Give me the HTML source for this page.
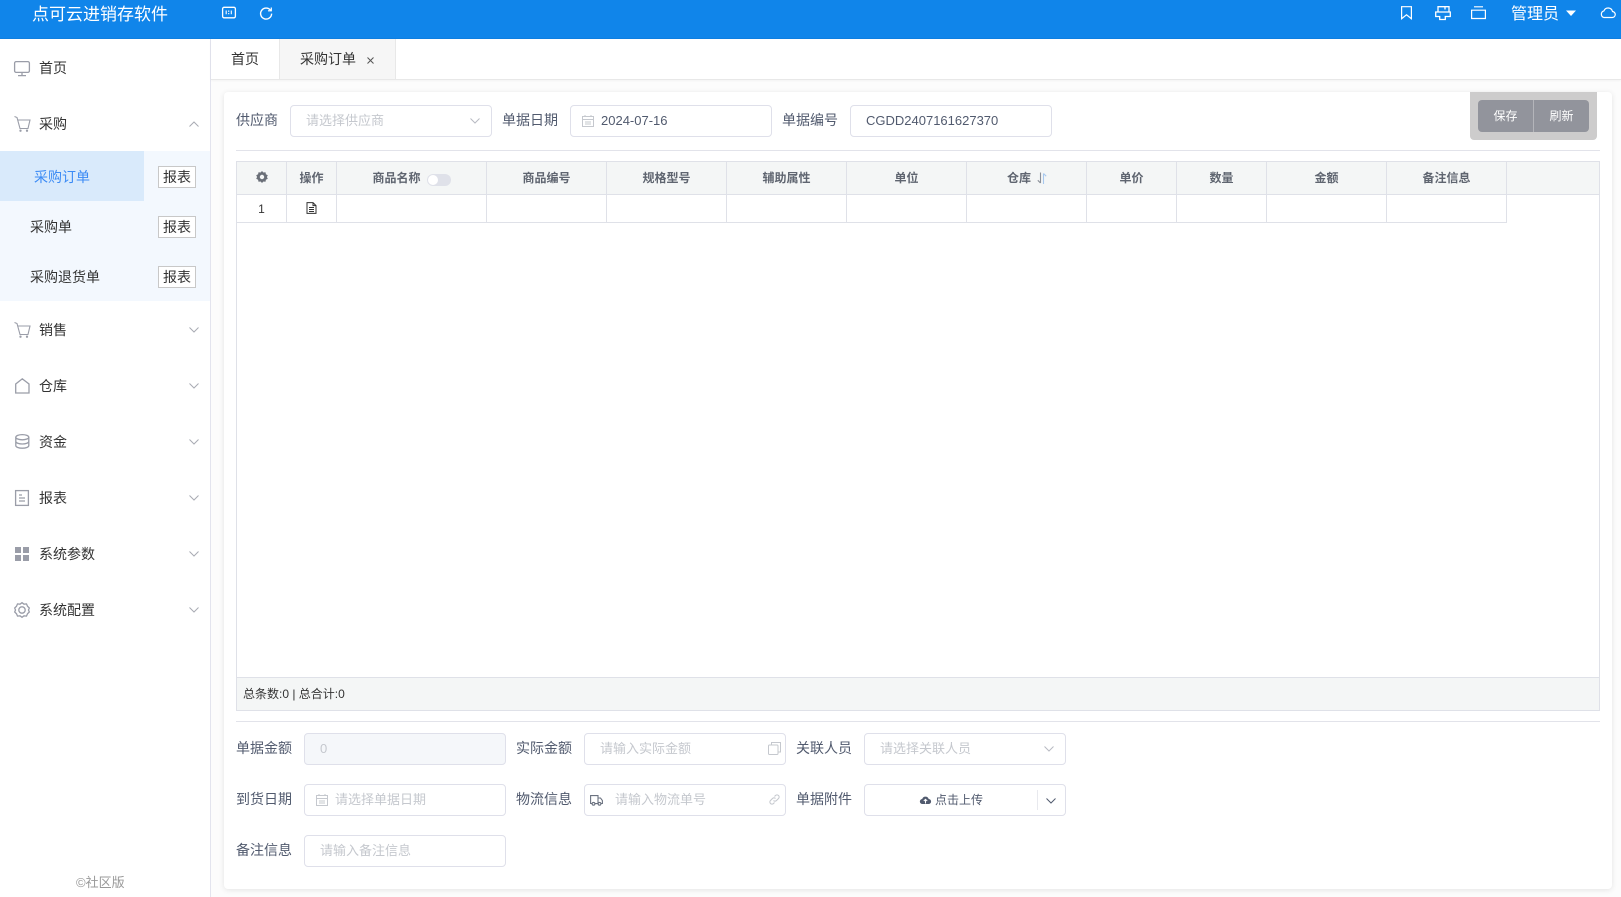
<!DOCTYPE html>
<html lang="zh-CN"><head><meta charset="utf-8"><title>采购订单</title>
<style>
*{box-sizing:border-box}
html,body{margin:0;padding:0}
body{width:1621px;height:897px;overflow:hidden;position:relative;background:#fcfcfc;font-family:"Liberation Sans","Noto Sans CJK SC",sans-serif;font-size:14px;color:#515a6e}
.a{position:absolute;white-space:nowrap}
svg{position:absolute;overflow:visible;fill:none}
#hd{left:0;top:0;width:1621px;height:39px;background:#1085ea;border-bottom:1px solid #0f7fe0}
#sd{left:0;top:39px;width:211px;height:858px;background:#fff;border-right:1px solid #e3e4ee}
.m{left:39px;line-height:20px;color:#333;font-size:14px}
.l{line-height:20px;color:#515a6e;font-size:14px}
.b{left:158px;width:38px;height:22px;border:1px solid #c8c8c8;background:#fff;color:#333;font-size:14px;line-height:20px;text-align:center}
.i{height:32px;width:202px;border:1px solid #dfe0ea;border-radius:4px;background:#fff;line-height:29px;padding-left:15px;color:#c5c8ce;font-size:13px}
.th{top:161px;height:33px;border-right:1px solid #dfe1e8;text-align:center;font-size:12px;font-weight:bold;line-height:35px;color:#5f6570}
.td{top:195px;height:28px;border-right:1px solid #dfe1e8;border-bottom:1px solid #dfe1e8}
</style></head><body>
<div id="hd" class="a"></div>
<div class="a" style="left:32px;top:4px;color:#fff;font-size:17px;line-height:22px">点可云进销存软件</div>
<svg style="left:222px;top:6px" width="14" height="14" stroke="#fff" stroke-width="1.3"><rect x=".6" y="1.300" width="12.800" height="10.500" rx="1.500"/><path d="M4.200 4.500v3.800M6.700 4.500v1.400M6.700 7v1.300M9.300 4.500v3.800" stroke-width="1.100"/></svg>
<svg style="left:259px;top:6px" width="14" height="14" stroke="#fff" stroke-width="1.400"><path d="M11.600 4.400A5.500 5.500 0 1 0 12.600 7.600"/><path d="M12.300 1.500v3.300H9" stroke-width="1.200"/></svg>
<svg style="left:1401px;top:6px" width="11" height="14" stroke="#fff" stroke-width="1.200"><path d="M.6.700h9.800v12L5.500 8.800.6 12.700z"/></svg>
<svg style="left:1435px;top:6px" width="16" height="14" stroke="#fff" stroke-width="1.300"><path d="M3 6V.7h11V6M10 .7v2.800M.7 6h14.600v4.500h-5v3H4.700v-3h-4z"/></svg>
<svg style="left:1471px;top:6px" width="15" height="13" stroke="#fff" stroke-width="1.200"><path d="M3 .8h9M.6 4.200h13.800V12.500H.6z"/></svg>
<div class="a" style="left:1511px;top:4px;color:#fff;font-size:16px;line-height:22px">管理员</div>
<svg style="left:1566px;top:10px" width="10" height="7"><path d="M0 .5h10L5 6z" fill="#fff"/></svg>
<svg style="left:1600px;top:6px" width="16" height="13" stroke="#fff" stroke-width="1.200"><path d="M4 11.500h8a3 3 0 0 0 .5-6 4.500 4.500 0 0 0-8.600-.6A3.400 3.400 0 0 0 4 11.500z"/></svg>

<div id="sd" class="a"></div>
<div class="a" style="left:0;top:151px;width:210px;height:150px;background:#f3f8fe"></div>
<div class="a" style="left:0;top:151px;width:144px;height:50px;background:#d9eafb"></div>

<svg style="left:14px;top:60px" width="18" height="18" stroke="#9a9da8" stroke-width="1.300"><rect x=".6" y="1.600" width="14.800" height="10.800" rx="1.500"/><path d="M8 12.500v3M4 15.600h8"/></svg>
<div class="a m" style="top:58px">首页</div>
<svg style="left:14px;top:116px" width="17" height="17" stroke="#9a9da8" stroke-width="1.100"><path d="M.5.500L3 1.500l3 11h8L16 4H3.500"/><circle cx="6.500" cy="14.700" r=".6"/><circle cx="13" cy="14.700" r=".6"/></svg>
<div class="a m" style="top:114px">采购</div>
<svg style="left:189px;top:121px" width="10" height="6" stroke="#a8abb3"><path d="M.5 5.500L5 1l4.500 4.500"/></svg>
<div class="a" style="left:34px;top:167px;line-height:20px;color:#3b8bf5">采购订单</div>
<div class="a m" style="left:30px;top:217px">采购单</div>
<div class="a m" style="left:30px;top:267px">采购退货单</div>
<div class="a b" style="top:166px">报表</div>
<div class="a b" style="top:216px">报表</div>
<div class="a b" style="top:266px">报表</div>

<svg style="left:14px;top:322px" width="17" height="17" stroke="#9a9da8" stroke-width="1.100"><path d="M.5.500L3 1.500l3 11h8L16 4H3.500"/><circle cx="6.500" cy="14.700" r=".6"/><circle cx="13" cy="14.700" r=".6"/></svg>
<div class="a m" style="top:320px">销售</div>
<svg style="left:15px;top:378px" width="15" height="16" stroke="#9a9da8" stroke-width="1.300"><path d="M.7 6L7.300.8 14 6v9H.7z"/></svg>
<div class="a m" style="top:376px">仓库</div>
<svg style="left:15px;top:434px" width="15" height="15" stroke="#9a9da8" stroke-width="1.300"><ellipse cx="7.300" cy="3.200" rx="6.500" ry="2.600"/><path d="M.8 3.200v8.400c0 1.500 3 2.600 6.500 2.600s6.500-1.100 6.500-2.600V3.200M.8 7.400c0 1.500 3 2.600 6.500 2.600s6.500-1.100 6.500-2.600"/></svg>
<div class="a m" style="top:432px">资金</div>
<svg style="left:15px;top:490px" width="14" height="16" stroke="#9a9da8" stroke-width="1.300"><rect x=".6" y=".6" width="12.800" height="14.800"/><path d="M4 5h3M4 8h6M4 11h6"/></svg>
<div class="a m" style="top:488px">报表</div>
<svg style="left:15px;top:547px" width="14" height="14"><path d="M0 0h6v6H0zM8 0h6v6H8zM0 8h6v6H0zM8 8h6v6H8z" fill="#9a9da8"/></svg>
<div class="a m" style="top:544px">系统参数</div>
<svg style="left:14px;top:602px" width="16" height="16" stroke="#9a9da8" stroke-width="1.300"><path d="M8 .7l2 1.500 2.500-.3 1 2.300 1.800 1.800-.8 2 .8 2-1.800 1.800-1 2.300-2.500-.3-2 1.500-2-1.500-2.500.3-1-2.300L.7 10l.8-2-.8-2 1.800-1.800 1-2.300 2.500.3z"/><circle cx="8" cy="8" r="3.200"/></svg>
<div class="a m" style="top:600px">系统配置</div>
<svg style="left:189px;top:327px" width="10" height="6" stroke="#a8abb3"><path d="M.5.500L5 5l4.500-4.500"/></svg>
<svg style="left:189px;top:383px" width="10" height="6" stroke="#a8abb3"><path d="M.5.500L5 5l4.500-4.500"/></svg>
<svg style="left:189px;top:439px" width="10" height="6" stroke="#a8abb3"><path d="M.5.500L5 5l4.500-4.500"/></svg>
<svg style="left:189px;top:495px" width="10" height="6" stroke="#a8abb3"><path d="M.5.500L5 5l4.500-4.500"/></svg>
<svg style="left:189px;top:551px" width="10" height="6" stroke="#a8abb3"><path d="M.5.500L5 5l4.500-4.500"/></svg>
<svg style="left:189px;top:607px" width="10" height="6" stroke="#a8abb3"><path d="M.5.500L5 5l4.500-4.500"/></svg>
<div class="a" style="left:76px;top:874px;font-size:13px;line-height:18px;color:#999">©社区版</div>

<div class="a" style="left:211px;top:39px;width:1410px;height:41px;background:#fff;border-bottom:1px solid #e8e8e8;box-shadow:0 1px 2px rgba(0,0,0,.04)"></div>
<div class="a" style="left:279px;top:39px;width:117px;height:40px;background:#f6f6f6;border-left:1px solid #e8e8e8;border-right:1px solid #e8e8e8"></div>
<div class="a" style="left:231px;top:49px;color:#333;line-height:20px">首页</div>
<div class="a" style="left:300px;top:49px;color:#333;line-height:20px">采购订单</div>
<svg style="left:367px;top:57px" width="7" height="7" stroke="#555"><path d="M.5.500l6 6M6.500.500l-6 6"/></svg>

<div class="a" style="left:224px;top:92px;width:1388px;height:797px;background:#fff;border-radius:4px;box-shadow:0 1px 6px rgba(0,0,0,.1)"></div>

<div class="a l" style="left:236px;top:110px">供应商</div>
<div class="a i" style="left:290px;top:105px">请选择供应商</div>
<svg style="left:470px;top:118px" width="10" height="6" stroke="#b8bac2"><path d="M.5.500L5 5l4.500-4.500"/></svg>
<div class="a l" style="left:502px;top:110px">单据日期</div>
<div class="a i" style="left:570px;top:105px;padding-left:30px;color:#515a6e">2024-07-16</div>
<svg style="left:582px;top:115px" width="12" height="12" stroke="#c5c8ce"><rect x=".5" y="1.500" width="11" height="10"/><path d="M.5 4.500h11M3 0v2M9 0v2M3 7h6M3 9h6"/></svg>
<div class="a l" style="left:782px;top:110px">单据编号</div>
<div class="a i" style="left:850px;top:105px;color:#515a6e">CGDD2407161627370</div>

<div class="a" style="left:1470px;top:92px;width:127px;height:48px;background:#cdcccc;border-radius:0 0 4px 4px"></div>
<div class="a" style="left:1478px;top:100px;width:111px;height:32px;background:#92949c;border-radius:4px"></div>
<div class="a" style="left:1533px;top:100px;width:1px;height:32px;background:#b4b5ba"></div>
<div class="a" style="left:1478px;top:100px;width:55px;line-height:32px;text-align:center;color:#fff;font-size:12px">保存</div>
<div class="a" style="left:1534px;top:100px;width:55px;line-height:32px;text-align:center;color:#fff;font-size:12px">刷新</div>

<div class="a" style="left:236px;top:150px;width:1364px;height:1px;background:#e2e3ea"></div>

<div class="a" style="left:236px;top:161px;width:1364px;height:550px;border:1px solid #dfe1e8"></div>
<div class="a" style="left:237px;top:162px;width:1362px;height:33px;background:#f4f6f6;border-bottom:1px solid #dfe1e8"></div>
<div class="a th" style="left:237px;width:50px"></div>
<svg style="left:256px;top:171px" width="12" height="12"><path d="M6 0l1.400 1.500 2.100-.3.400 2.100 1.900 1-.9 1.700.9 1.700-1.900 1-.4 2.100-2.100-.3L6 12l-1.400-1.500-2.100.3-.4-2.100-1.900-1 .9-1.700-.9-1.700 1.900-1 .4-2.100 2.100.3z" fill="#6a6f78"/><circle cx="6" cy="6" r="2.200" fill="#f4f6f6"/></svg>
<div class="a th" style="left:287px;width:50px">操作</div>
<div class="a th" style="left:337px;width:150px;padding-right:30px">商品名称</div>
<div class="a" style="left:427px;top:174px;width:24px;height:12px;border-radius:6px;background:#dfe1e9"></div>
<div class="a" style="left:428px;top:175px;width:10px;height:10px;border-radius:5px;background:#fff"></div>
<div class="a th" style="left:487px;width:120px">商品编号</div>
<div class="a th" style="left:607px;width:120px">规格型号</div>
<div class="a th" style="left:727px;width:120px">辅助属性</div>
<div class="a th" style="left:847px;width:120px">单位</div>
<div class="a th" style="left:967px;width:120px;padding-right:15px">仓库</div>
<svg style="left:1037px;top:172px" width="11" height="13" stroke-width="1.100"><path d="M3.500 .5v10.500M3.500 11L.8 8.300" stroke="#8b9099"/><path d="M6.500 12V1.500M6.500 1.500L9.200 4.200" stroke="#a8c8ee"/></svg>
<div class="a th" style="left:1087px;width:90px">单价</div>
<div class="a th" style="left:1177px;width:90px">数量</div>
<div class="a th" style="left:1267px;width:120px">金额</div>
<div class="a th" style="left:1387px;width:120px">备注信息</div>

<div class="a td" style="left:237px;width:50px;text-align:center;font-size:12px;line-height:28px;color:#333">1</div>
<div class="a td" style="left:287px;width:50px"></div>
<svg style="left:306px;top:202px" width="11" height="12" stroke="#333" stroke-width="1"><path d="M1 .6h6l3 3v7.800H1zM7 .6v3h3M3 5.500h5M3 7.500h5M3 9.500h5"/></svg>
<div class="a td" style="left:337px;width:150px"></div>
<div class="a td" style="left:487px;width:120px"></div>
<div class="a td" style="left:607px;width:120px"></div>
<div class="a td" style="left:727px;width:120px"></div>
<div class="a td" style="left:847px;width:120px"></div>
<div class="a td" style="left:967px;width:120px"></div>
<div class="a td" style="left:1087px;width:90px"></div>
<div class="a td" style="left:1177px;width:90px"></div>
<div class="a td" style="left:1267px;width:120px"></div>
<div class="a td" style="left:1387px;width:120px"></div>

<div class="a" style="left:237px;top:677px;width:1362px;height:33px;background:#f4f6f6;border-top:1px solid #dfe1e8"></div>
<div class="a" style="left:243px;top:685px;font-size:12px;line-height:18px;color:#333">总条数:0 | 总合计:0</div>
<div class="a" style="left:236px;top:721px;width:1364px;height:1px;background:#e2e3ea"></div>

<div class="a l" style="left:236px;top:738px">单据金额</div>
<div class="a i" style="left:304px;top:733px;background:#f5f7fa;padding-left:15px">0</div>
<div class="a l" style="left:516px;top:738px">实际金额</div>
<div class="a i" style="left:584px;top:733px">请输入实际金额</div>
<svg style="left:768px;top:742px" width="13" height="13" stroke="#c5c8ce"><path d="M3.500 3V.5h9v9.500H10"/><rect x=".5" y="3" width="9.500" height="9.500" rx="1"/></svg>
<div class="a l" style="left:796px;top:738px">关联人员</div>
<div class="a i" style="left:864px;top:733px">请选择关联人员</div>
<svg style="left:1044px;top:746px" width="10" height="6" stroke="#b8bac2"><path d="M.5.500L5 5l4.500-4.500"/></svg>

<div class="a l" style="left:236px;top:789px">到货日期</div>
<div class="a i" style="left:304px;top:784px;padding-left:30px">请选择单据日期</div>
<svg style="left:316px;top:794px" width="12" height="12" stroke="#c5c8ce"><rect x=".5" y="1.500" width="11" height="10"/><path d="M.5 4.500h11M3 0v2M9 0v2M3 7h6M3 9h6"/></svg>
<div class="a l" style="left:516px;top:789px">物流信息</div>
<div class="a i" style="left:584px;top:784px;padding-left:30px">请输入物流单号</div>
<svg style="left:590px;top:795px" width="13" height="11" stroke="#6b7280" stroke-width="1.100"><path d="M2 8.500H.6V.6H8v8H5M8 3h2.500L12.400 5.500v3H11"/><circle cx="3.500" cy="8.800" r="1.400"/><circle cx="9.500" cy="8.800" r="1.400"/></svg>
<svg style="left:769px;top:794px" width="11" height="11" stroke="#c5c8ce" stroke-width="1.100"><path d="M4.500 6.500a2 2 0 0 0 3 0l2-2a2 2 0 0 0-3-3L5.500 2.500M6.500 4.500a2 2 0 0 0-3 0l-2 2a2 2 0 0 0 3 3L5.500 8.500"/></svg>
<div class="a l" style="left:796px;top:789px">单据附件</div>
<div class="a i" style="left:864px;top:784px"></div>
<svg style="left:920px;top:795px" width="11" height="10"><path d="M2.500 9A2.500 2.500 0 0 1 2.200 4a3.400 3.400 0 0 1 6.500 0A2.500 2.500 0 0 1 8.500 9z" fill="#515a6e"/><path d="M5.500 8.500V4.500M3.800 6l1.700-1.700L7.200 6" stroke="#fff"/></svg>
<div class="a" style="left:935px;top:791px;font-size:12px;line-height:18px;color:#515a6e">点击上传</div>
<div class="a" style="left:1037px;top:790px;width:1px;height:20px;background:#e8e9ee"></div>
<svg style="left:1046px;top:798px" width="10" height="6" stroke="#515a6e"><path d="M.5.500L5 5l4.500-4.500"/></svg>

<div class="a l" style="left:236px;top:840px">备注信息</div>
<div class="a i" style="left:304px;top:835px">请输入备注信息</div>
</body></html>
